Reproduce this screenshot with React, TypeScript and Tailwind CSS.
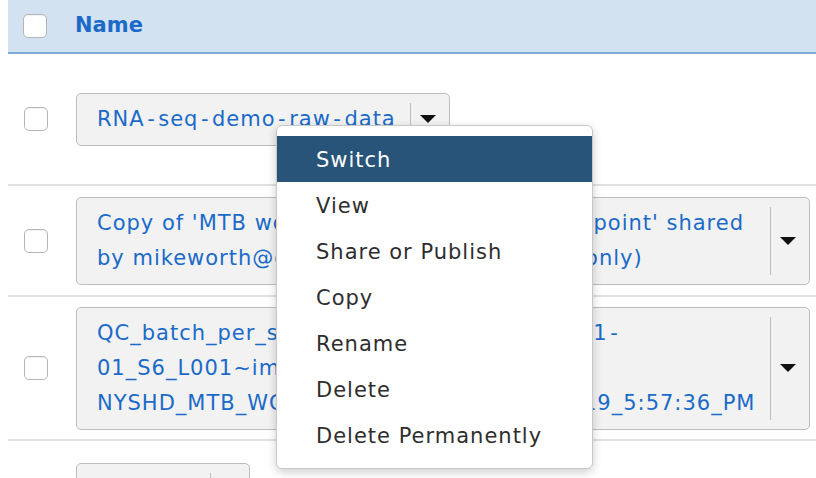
import React from 'react';

const font = { fontFamily: '"DejaVu Sans", Verdana, sans-serif' };

const Checkbox: React.FC = () => (
  <div className="w-[24px] h-[24px] rounded-[5px] border border-[#b5b5b5] bg-white shadow-[inset_0_1px_1px_rgba(0,0,0,0.05)]" />
);

const Caret: React.FC = () => (
  <svg width="16" height="8" viewBox="0 0 16 8">
    <path d="M0 0 H16 L8 8 Z" fill="#111" />
  </svg>
);

// hyphens are wider in the original font
const withHyphens = (text: string) =>
  text.split('-').map((part, i, arr) => (
    <React.Fragment key={i}>
      {part}
      {i < arr.length - 1 && <span className="px-[2.5px]">-</span>}
    </React.Fragment>
  ));

interface NameButtonProps {
  lines: string[];
  full?: boolean;
  width?: string;
}

const NameButton: React.FC<NameButtonProps> = ({ lines, full, width }) => (
  <div
    className={`flex items-stretch bg-[#f2f2f2] border border-[#bdbdbd] rounded-[5px] ${full ? 'flex-1' : ''} ${width ?? ''}`}
  >
    <div className="flex-1 pl-[20px] pr-[14px] py-[8px] text-[21px] tracking-[1px] leading-[35px] text-[#1b6ac9] whitespace-nowrap overflow-hidden">
      {lines.map((l, i) => (
        <div key={i} className="h-[35px]">
          {withHyphens(l)}
        </div>
      ))}
    </div>
    <div className="flex items-center py-[9px]">
      <div className="self-stretch w-px bg-[#bdbdbd]" />
      <div className="pl-[9px] pr-[13px] flex items-center">
        <Caret />
      </div>
    </div>
  </div>
);

const menuItems = ['Switch', 'View', 'Share or Publish', 'Copy', 'Rename', 'Delete', 'Delete Permanently'];

export default function App() {
  return (
    <div className="relative w-[816px] h-[478px] overflow-hidden bg-white" style={font}>
      <div className="ml-[8px]">
        <div className="flex items-center h-[54px] bg-[#d2e2f1] border-b-2 border-[#7eacd6]">
          <div className="pl-[15px] w-[67px]">
            <Checkbox />
          </div>
          <div className="text-[21px] font-bold text-[#1b6ac9]">Name</div>
        </div>

        <div className="flex items-center h-[132px] border-b-2 border-[#e1e1e1]">
          <div className="pl-[16px] w-[68px]">
            <Checkbox />
          </div>
          <NameButton lines={['RNA-seq-demo-raw-data']} />
        </div>

        <div className="flex items-center h-[111px] border-b-2 border-[#e1e1e1] pr-[6px]">
          <div className="pl-[16px] w-[68px]">
            <Checkbox />
          </div>
          <NameButton
            full
            lines={["Copy of 'MTB workflow v2 with a raw checkpoint' shared", 'by mikeworth@gmail.com (view and read-only)']}
          />
        </div>

        <div className="flex items-center h-[144px] border-b-2 border-[#e1e1e1] pr-[6px]">
          <div className="pl-[16px] w-[68px]">
            <Checkbox />
          </div>
          <NameButton
            full
            lines={[
              'QC_batch_per_sample_Run_NYSHD-2019-11-',
              '01_S6_L001~imported',
              'NYSHD_MTB_WGS_Run_pipeline_11-01-2019_5:57:36_PM',
            ]}
          />
        </div>

        <div className="flex items-start pt-[22px] h-[60px]">
          <div className="pl-[16px] w-[68px]" />
          <NameButton width="w-[174px]" lines={['']} />
        </div>
      </div>

      <div className="absolute left-[276px] top-[125px] w-[317px] rounded-[6px] border border-[#c8c8c8] bg-white shadow-[0_3px_10px_rgba(0,0,0,0.2)] py-[10px]">
        {menuItems.map((item, i) => (
          <div
            key={item}
            className={`h-[46px] flex items-center pl-[39px] pt-[4px] text-[21px] tracking-[1px] ${
              i === 0 ? 'bg-[#285479] text-white' : 'text-[#2e2e2e]'
            }`}
          >
            {item}
          </div>
        ))}
      </div>
    </div>
  );
}
